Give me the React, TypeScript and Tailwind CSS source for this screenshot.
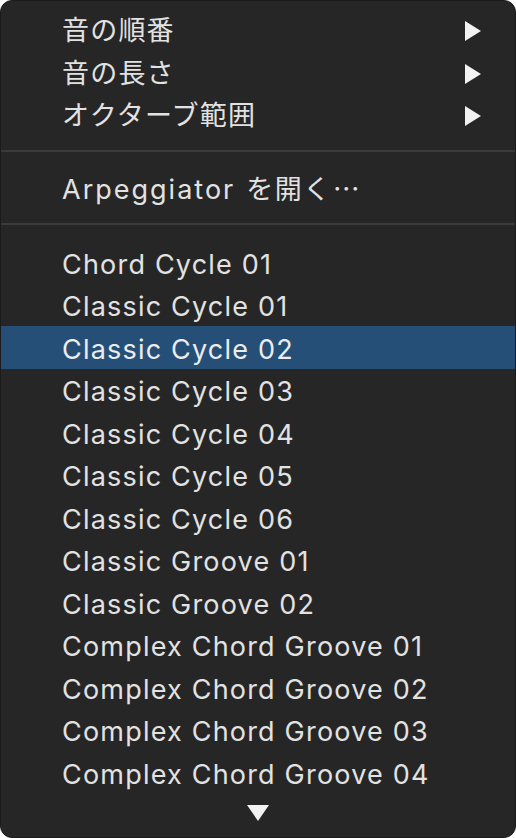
import React from 'react';

interface MenuRowProps {
  label: React.ReactNode;
  submenu?: boolean;
  selected?: boolean;
  latin?: boolean;
}

const submenus = ['音の順番', '音の長さ', 'オクターブ範囲'];

const presets = [
  'Chord Cycle 01',
  'Classic Cycle 01',
  'Classic Cycle 02',
  'Classic Cycle 03',
  'Classic Cycle 04',
  'Classic Cycle 05',
  'Classic Cycle 06',
  'Classic Groove 01',
  'Classic Groove 02',
  'Complex Chord Groove 01',
  'Complex Chord Groove 02',
  'Complex Chord Groove 03',
  'Complex Chord Groove 04',
];

const MenuRow = ({ label, submenu, selected, latin }: MenuRowProps) => {
  return (
    <div
      className={
        selected
          ? 'flex h-[42.5px] shrink-0 items-center justify-between bg-[#264f78] pl-[61px] pr-[34px] text-[#ececec]'
          : 'flex h-[42.5px] shrink-0 items-center justify-between pl-[61px] pr-[34px] text-[#e2e2e2]'
      }
    >
      <span className={latin ? 'whitespace-nowrap pt-[5px]' : 'whitespace-nowrap'}>{label}</span>
      {submenu && (
        <svg width="16" height="20" viewBox="0 0 16 20" className="shrink-0">
          <path d="M0 0 L16 10 L0 20 Z" fill="#f2f2f2" />
        </svg>
      )}
    </div>
  );
};

const App = () => {
  return (
    <div className="h-[838px] w-[516px] bg-white">
      <div
        className="flex h-full flex-col overflow-hidden rounded-[12px] border border-[#1b1b1b] bg-[#262626] pt-[9px] text-[27px] tracking-[1.2px]"
        style={{ fontFamily: 'Inter, "Noto Sans CJK JP", sans-serif' }}
      >
        {submenus.map((label) => (
          <MenuRow key={label} label={label} submenu />
        ))}
        <div className="shrink-0 pb-[14px] pt-[12px]">
          <div className="h-[2px] bg-[#3a3a3a]" />
        </div>
        <MenuRow
          latin
          label={
            <>
              <span className="tracking-[2px]">Arpeggiator</span>
              <span className="ml-[11px] tracking-[1.5px]">を開く</span>
              <span
                className="ml-[1px] tracking-[3px]"
                style={{ fontFamily: '"Noto Sans CJK JP", sans-serif' }}
              >
                …
              </span>
            </>
          }
        />
        <div className="shrink-0 pb-[16px] pt-[15px]">
          <div className="h-[2px] bg-[#3a3a3a]" />
        </div>
        {presets.map((label) => (
          <MenuRow key={label} latin label={label} selected={label === 'Classic Cycle 02'} />
        ))}
        <div className="flex justify-center pt-[11px]">
          <svg width="22" height="16" viewBox="0 0 22 16">
            <path d="M0 0 L22 0 L11 16 Z" fill="#f2f2f2" />
          </svg>
        </div>
      </div>
    </div>
  );
};

export default App;
